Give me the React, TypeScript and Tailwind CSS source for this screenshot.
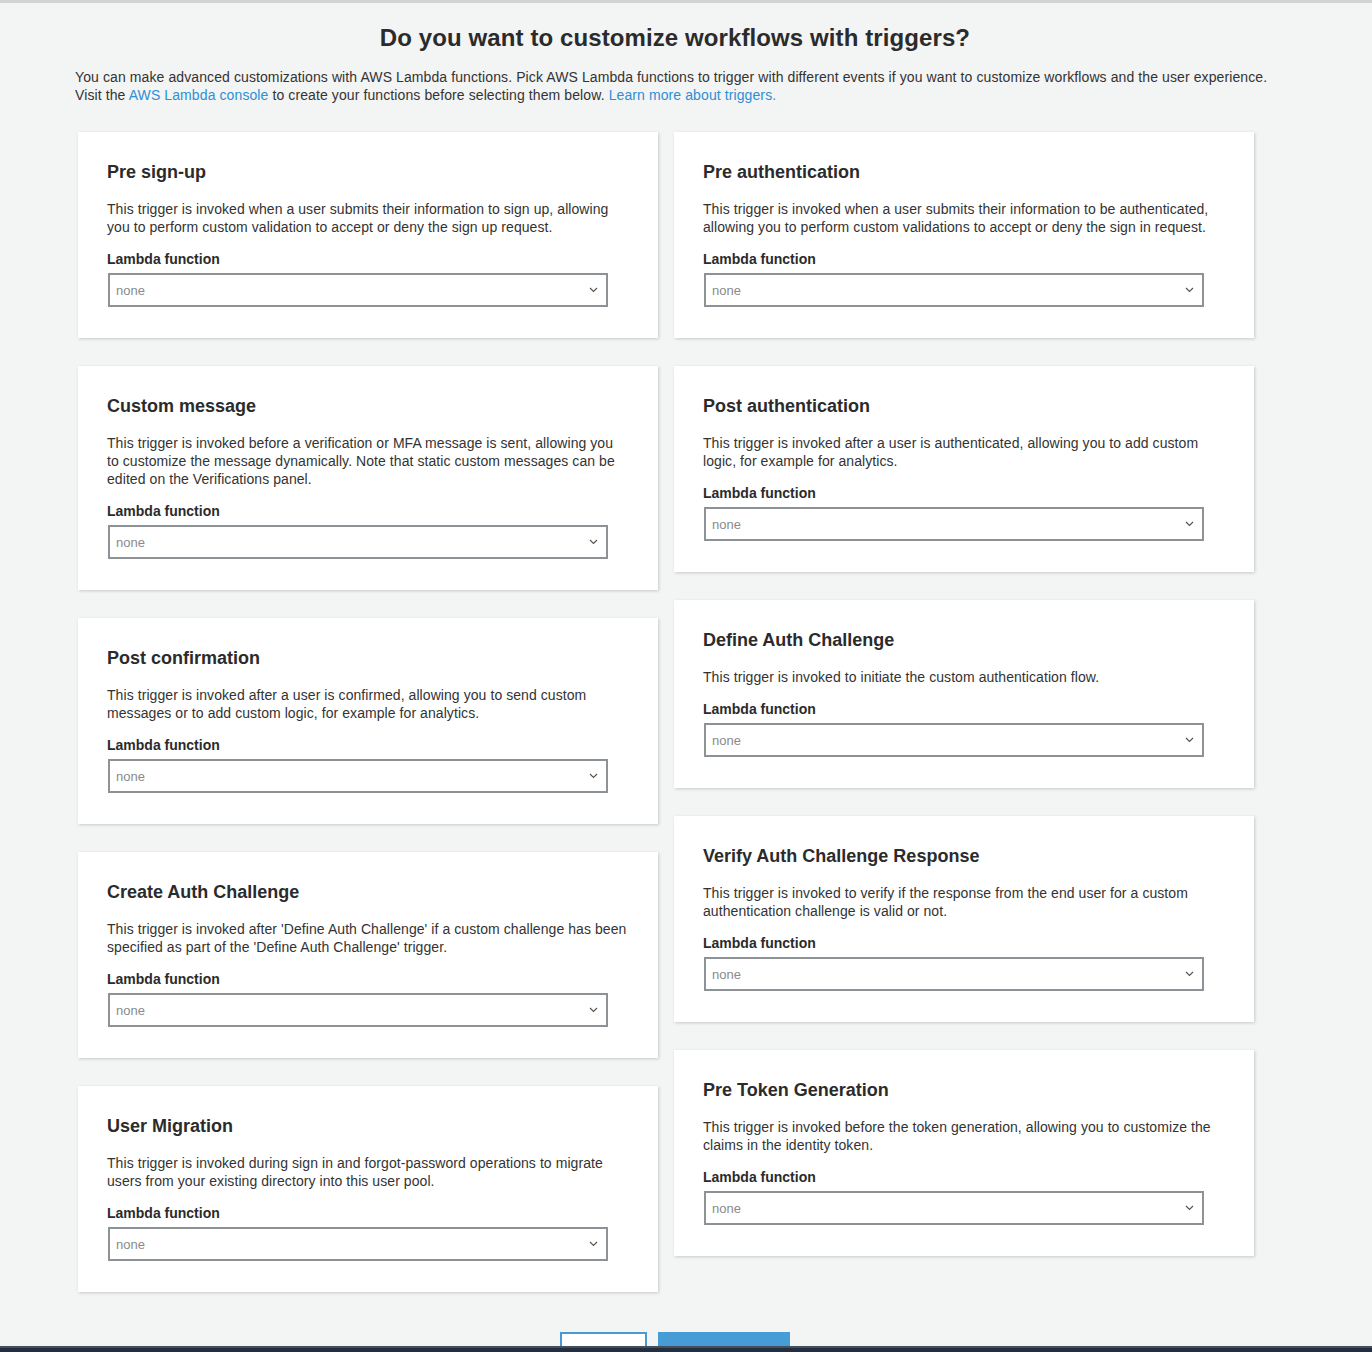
import React from "react";

type Trigger = { title: string; desc: string[] };

const leftColumn: Trigger[] = [
  {
    title: "Pre sign-up",
    desc: [
      "This trigger is invoked when a user submits their information to sign up, allowing",
      "you to perform custom validation to accept or deny the sign up request.",
    ],
  },
  {
    title: "Custom message",
    desc: [
      "This trigger is invoked before a verification or MFA message is sent, allowing you",
      "to customize the message dynamically. Note that static custom messages can be",
      "edited on the Verifications panel.",
    ],
  },
  {
    title: "Post confirmation",
    desc: [
      "This trigger is invoked after a user is confirmed, allowing you to send custom",
      "messages or to add custom logic, for example for analytics.",
    ],
  },
  {
    title: "Create Auth Challenge",
    desc: [
      "This trigger is invoked after 'Define Auth Challenge' if a custom challenge has been",
      "specified as part of the 'Define Auth Challenge' trigger.",
    ],
  },
  {
    title: "User Migration",
    desc: [
      "This trigger is invoked during sign in and forgot-password operations to migrate",
      "users from your existing directory into this user pool.",
    ],
  },
];

const rightColumn: Trigger[] = [
  {
    title: "Pre authentication",
    desc: [
      "This trigger is invoked when a user submits their information to be authenticated,",
      "allowing you to perform custom validations to accept or deny the sign in request.",
    ],
  },
  {
    title: "Post authentication",
    desc: [
      "This trigger is invoked after a user is authenticated, allowing you to add custom",
      "logic, for example for analytics.",
    ],
  },
  {
    title: "Define Auth Challenge",
    desc: ["This trigger is invoked to initiate the custom authentication flow."],
  },
  {
    title: "Verify Auth Challenge Response",
    desc: [
      "This trigger is invoked to verify if the response from the end user for a custom",
      "authentication challenge is valid or not.",
    ],
  },
  {
    title: "Pre Token Generation",
    desc: [
      "This trigger is invoked before the token generation, allowing you to customize the",
      "claims in the identity token.",
    ],
  },
];

function Chevron() {
  return (
    <svg width="9" height="6" viewBox="0 0 9 6" fill="none" className="shrink-0">
      <path d="M1 1l3.5 3.5L8 1" stroke="#555" strokeWidth="1.2" />
    </svg>
  );
}

function TriggerCard({ t }: { t: Trigger }) {
  return (
    <div className="w-[580px] bg-white pl-[29px] pr-[28px] pt-[28px] pb-[31px] shadow-[1px_1px_3px_rgba(0,0,0,0.18)]">
      <h3 className="text-[18px] leading-[24px] font-bold text-[#2b2b2b]">{t.title}</h3>
      <p className="mt-[16px] text-[14px] leading-[18px] tracking-[0.07px] text-[#333]">
        {t.desc.map((line, i) => (
          <span key={i} className="block whitespace-nowrap">
            {line}
          </span>
        ))}
      </p>
      <div className="mt-[14px] text-[14px] leading-[18px] font-bold text-[#2b2b2b]">Lambda function</div>
      <div className="mt-[5px] ml-px flex h-[34px] w-[500px] items-center justify-between border-2 border-[#8c9295] bg-white pl-[6px] pr-[8px]">
        <span className="pt-[2px] text-[13px] text-[#8a8a8a]">none</span>
        <Chevron />
      </div>
    </div>
  );
}

export default function App() {
  return (
    <div
      className="relative min-h-[1352px] bg-[#f3f4f4] border-t-[3px] border-[#d2d3d3]"
      style={{ fontFamily: '"Liberation Sans", Arial, Helvetica, sans-serif' }}
    >
      <h1 className="pt-[19px] pr-[22px] text-center text-[24px] leading-[32px] font-bold tracking-[0.1px] text-[#2b2b2b]">
        Do you want to customize workflows with triggers?
      </h1>
      <p className="mt-[14px] pl-[75px] text-[14px] leading-[18px] tracking-[0.1px] text-[#333]">
        <span className="block whitespace-nowrap">
          You can make advanced customizations with AWS Lambda functions. Pick AWS Lambda functions to trigger with different events if you want to customize workflows and the user experience.
        </span>
        <span className="block whitespace-nowrap">
          Visit the <span className="text-[#2e8fd4]">AWS Lambda console</span> to create your functions before selecting them below.{" "}
          <span className="text-[#2e8fd4]">Learn more about triggers.</span>
        </span>
      </p>

      <div className="mt-[28px] ml-[78px] flex items-start gap-[16px]">
        <div className="flex flex-col gap-[28px]">
          {leftColumn.map((t) => (
            <TriggerCard key={t.title} t={t} />
          ))}
        </div>
        <div className="flex flex-col gap-[28px]">
          {rightColumn.map((t) => (
            <TriggerCard key={t.title} t={t} />
          ))}
        </div>
      </div>

      <div className="mt-[40px] flex justify-center gap-[11px] pr-[22px]">
        <button className="h-[34px] w-[87px] border-2 border-[#459cd5] bg-white" />
        <button className="h-[34px] w-[132px] bg-[#469dd6]" />
      </div>

      <div className="fixed bottom-0 left-0 right-0 h-[6px] border-t-2 border-[#434f5d] bg-[#232f3e]" />
    </div>
  );
}
